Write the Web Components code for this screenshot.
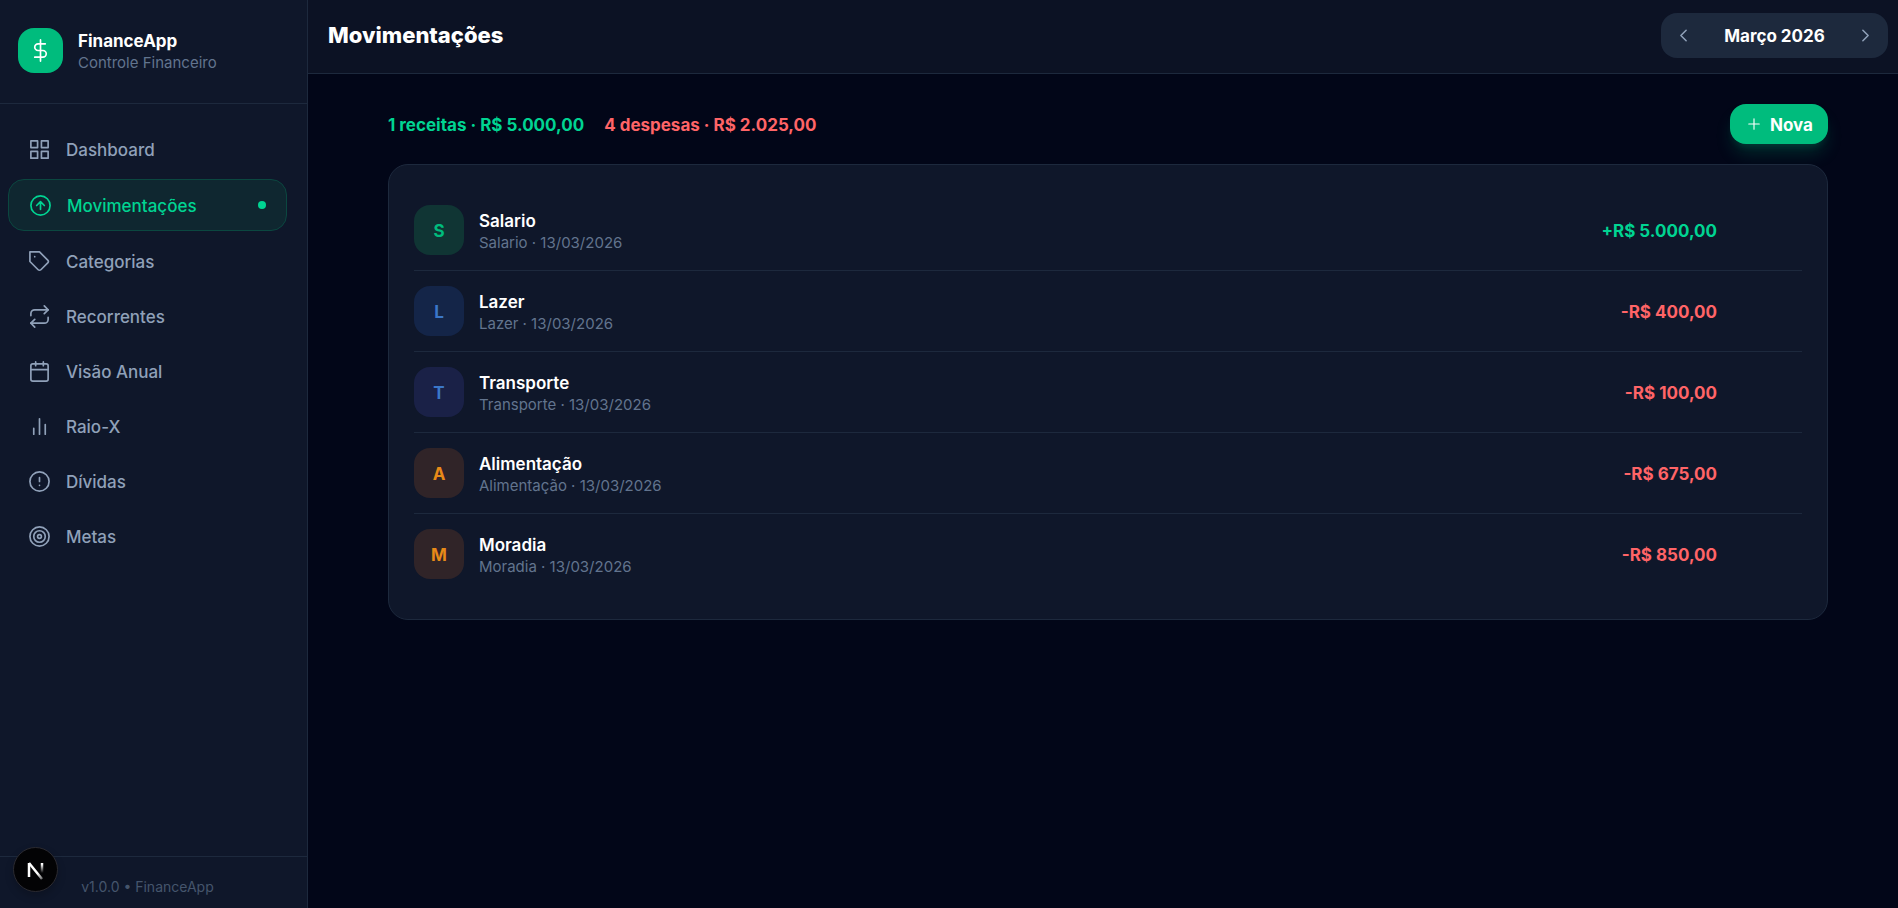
<!DOCTYPE html>
<html lang="pt-BR">
<head>
<meta charset="utf-8">
<meta name="viewport" content="width=device-width, initial-scale=1">
<title>FinanceApp</title>
<style>
    :root {
        --bg: #020618;
        --surface: #0f172a;
        --line: #1d293d;
        --muted: #90a1b9;
        --dim: #62748e;
        --green: #00bc7d;
        --green-text: #00d492;
        --red: #ff6467;
        --radius: 16px;
    }
    body {
        margin: 0;
        background: var(--bg);
        color: #fff;
        font-family: Inter, "Liberation Sans", sans-serif;
    }
</style>
</head>
<body>
<finance-app>
    <app-sidebar slot="sidebar">
        <nav-item icon="grid">Dashboard</nav-item>
        <nav-item icon="arrow" active>Movimentações</nav-item>
        <nav-item icon="tag">Categorias</nav-item>
        <nav-item icon="repeat">Recorrentes</nav-item>
        <nav-item icon="calendar">Visão Anual</nav-item>
        <nav-item icon="bars">Raio-X</nav-item>
        <nav-item icon="alert">Dívidas</nav-item>
        <nav-item icon="target">Metas</nav-item>
    </app-sidebar>
    <app-header slot="header">
        Movimentações
        <month-picker slot="actions">Março 2026</month-picker>
    </app-header>
    <summary-bar>
        <span slot="income">1 receitas · R$ 5.000,00</span>
        <span slot="expense">4 despesas · R$ 2.025,00</span>
    </summary-bar>
    <transaction-list>
        <transaction-item category="Salario" date="13/03/2026" amount="+R$ 5.000,00" income style="--tint: #103534; --ink: #00bc7d">Salario</transaction-item>
        <transaction-item category="Lazer" date="13/03/2026" amount="-R$ 400,00" style="--tint: #142548; --ink: #3b77c8">Lazer</transaction-item>
        <transaction-item category="Transporte" date="13/03/2026" amount="-R$ 100,00" style="--tint: #1a2147; --ink: #3b77c8">Transporte</transaction-item>
        <transaction-item category="Alimentação" date="13/03/2026" amount="-R$ 675,00" style="--tint: #302428; --ink: #e88a18">Alimentação</transaction-item>
        <transaction-item category="Moradia" date="13/03/2026" amount="-R$ 850,00" style="--tint: #302428; --ink: #e88a18">Moradia</transaction-item>
    </transaction-list>
</finance-app>
<dev-badge></dev-badge>

<script>
const ICONS = {
    grid: '<rect x="3" y="3" width="7" height="7"/><rect x="14" y="3" width="7" height="7"/><rect x="14" y="14" width="7" height="7"/><rect x="3" y="14" width="7" height="7"/>',
    arrow: '<circle cx="12" cy="12" r="10"/><path d="m16 12-4-4-4 4M12 16V8"/>',
    tag: '<path d="M20.59 13.41l-7.17 7.17a2 2 0 0 1-2.83 0L2 12V2h10l8.59 8.59a2 2 0 0 1 0 2.82z"/><path d="M7 7h.01"/>',
    repeat: '<path d="m17 1 4 4-4 4"/><path d="M3 11V9a4 4 0 0 1 4-4h14"/><path d="m7 23-4-4 4-4"/><path d="M21 13v2a4 4 0 0 1-4 4H3"/>',
    calendar: '<rect x="3" y="4" width="18" height="18" rx="2"/><path d="M16 2v4M8 2v4M3 10h18"/>',
    bars: '<path d="M18 20V10M12 20V4M6 20v-6"/>',
    alert: '<circle cx="12" cy="12" r="10"/><path d="M12 8v4M12 16h.01"/>',
    target: '<circle cx="12" cy="12" r="10"/><circle cx="12" cy="12" r="6"/><circle cx="12" cy="12" r="2"/>',
    dollar: '<path d="M12 1v22M17 5H9.5a3.5 3.5 0 0 0 0 7h5a3.5 3.5 0 0 1 0 7H6"/>',
    left: '<path d="m15 18-6-6 6-6"/>',
    right: '<path d="m9 18 6-6-6-6"/>',
    plus: '<path d="M12 5v14M5 12h14"/>'
};

const icon = (name, size, stroke = 1.75) => `
    <svg width="${size}" height="${size}" viewBox="0 0 24 24" fill="none" stroke="currentColor"
        stroke-width="${stroke}" stroke-linecap="round" stroke-linejoin="round" aria-hidden="true">${ICONS[name]}</svg>`;

class BaseElement extends HTMLElement {
    constructor() {
        super();
        this.shadowDOM = this.attachShadow({mode: "open"});
    }

    connectedCallback() {
        this.shadowDOM.innerHTML = this.render();
    }
}

class FinanceApp extends BaseElement {
    render() {
        return `
            <style>
            :host {
                display: flex;
                min-height: 100vh;
            }
            .main {
                flex: 1;
                min-width: 0;
            }
            main {
                display: flex;
                flex-direction: column;
                gap: 20px;
                max-width: 1440px;
                margin: 0 auto;
                padding: 30px 70px 30px 80px;
            }
            </style>
            <slot name="sidebar"></slot>
            <div class="main">
                <slot name="header"></slot>
                <main><slot></slot></main>
            </div>
        `;
    }
}

class AppSidebar extends BaseElement {
    render() {
        return `
            <style>
            :host {
                display: flex;
                flex-direction: column;
                flex: none;
                width: 307px;
                background: var(--surface);
                border-right: 1px solid var(--line);
            }
            header {
                display: flex;
                align-items: flex-start;
                gap: 15px;
                padding: 28px 18px 29px;
                border-bottom: 1px solid var(--line);
            }
            .logo {
                display: grid;
                place-items: center;
                width: 45px;
                height: 45px;
                border-radius: var(--radius);
                background: var(--green);
            }
            .brand {
                padding-top: 2px;
            }
            .name {
                font-size: 17px;
                line-height: 22px;
                font-weight: 700;
            }
            .tagline {
                font-size: 15px;
                line-height: 22px;
                color: var(--dim);
            }
            nav {
                display: flex;
                flex-direction: column;
                gap: 5px;
                flex: 1;
                padding: 20px 20px 20px 8px;
            }
            footer {
                padding: 20px 20px 11px 8px;
                border-top: 1px solid var(--line);
                font-size: 14px;
                line-height: 20px;
                text-align: center;
                color: #45556c;
            }
            </style>
            <header>
                <div class="logo">${icon("dollar", 23)}</div>
                <div class="brand">
                    <div class="name">FinanceApp</div>
                    <div class="tagline">Controle Financeiro</div>
                </div>
            </header>
            <nav><slot></slot></nav>
            <footer>v1.0.0 • FinanceApp</footer>
        `;
    }
}

class NavItem extends BaseElement {
    render() {
        const active = this.hasAttribute("active");
        return `
            <style>
            :host {
                display: block;
            }
            a {
                display: flex;
                align-items: center;
                gap: 15px;
                height: 50px;
                padding: 0 20px;
                border-radius: var(--radius);
                font-size: 17px;
                font-weight: 500;
                color: var(--muted);
                text-decoration: none;
            }
            :host([active]) a {
                border: 1px solid #0b4740;
                background: #0f2730;
                color: var(--green-text);
            }
            .label {
                flex: 1;
                padding-top: 2px;
            }
            .dot {
                width: 8px;
                height: 8px;
                border-radius: 50%;
                background: var(--green-text);
            }
            </style>
            <a href="#"${active ? ' aria-current="page"' : ""}>
                ${icon(this.getAttribute("icon"), 23)}
                <span class="label"><slot></slot></span>
                ${active ? '<span class="dot"></span>' : ""}
            </a>
        `;
    }
}

class AppHeader extends BaseElement {
    render() {
        return `
            <style>
            :host {
                display: flex;
                align-items: center;
                justify-content: space-between;
                padding: 13px 10px 15px 20px;
                background: #0c1224;
                border-bottom: 1px solid var(--line);
            }
            h1 {
                margin: 0;
                padding-bottom: 2px;
                font-size: 22px;
                line-height: 30px;
                font-weight: 800;
            }
            </style>
            <h1><slot></slot></h1>
            <slot name="actions"></slot>
        `;
    }
}

class MonthPicker extends BaseElement {
    render() {
        return `
            <style>
            :host {
                display: flex;
                align-items: center;
                box-sizing: border-box;
                width: 227px;
                height: 45px;
                padding: 0 5px;
                border-radius: var(--radius);
                background: var(--line);
            }
            button {
                display: grid;
                place-items: center;
                width: 35px;
                height: 35px;
                padding: 0;
                border: 0;
                background: none;
                color: var(--muted);
                cursor: pointer;
            }
            span {
                flex: 1;
                text-align: center;
                font-size: 17px;
                font-weight: 700;
            }
            </style>
            <button aria-label="Mês anterior">${icon("left", 21)}</button>
            <span><slot></slot></span>
            <button aria-label="Próximo mês">${icon("right", 21)}</button>
        `;
    }
}

class SummaryBar extends BaseElement {
    render() {
        return `
            <style>
            :host {
                display: flex;
                align-items: center;
                justify-content: space-between;
                font-size: 17px;
                font-weight: 700;
            }
            .totals {
                display: flex;
                gap: 20px;
                padding-top: 2px;
            }
            .income {
                color: var(--green-text);
            }
            .expense {
                color: var(--red);
            }
            button {
                display: flex;
                align-items: center;
                gap: 7px;
                height: 40px;
                padding: 0 15px;
                border: 0;
                border-radius: var(--radius);
                background: var(--green);
                box-shadow: 0 12px 18px -3px #00bc7d33, 0 5px 8px -4px #00bc7d33;
                color: #fff;
                font: inherit;
                cursor: pointer;
            }
            .label {
                padding-top: 2px;
            }
            </style>
            <div class="totals">
                <span class="income"><slot name="income"></slot></span>
                <span class="expense"><slot name="expense"></slot></span>
            </div>
            <button>${icon("plus", 18, 1.5)}<span class="label">Nova</span></button>
        `;
    }
}

class TransactionList extends BaseElement {
    render() {
        return `
            <style>
            :host {
                display: block;
                position: relative;
                padding: 25px;
                border: 1px solid var(--line);
                border-radius: 20px;
                background: var(--surface);
            }
            </style>
            <slot></slot>
        `;
    }
}

class TransactionItem extends BaseElement {
    render() {
        return `
            <style>
            :host {
                display: flex;
                align-items: center;
                gap: 15px;
                padding: 15px 85px 15px 0;
                border-bottom: 1px solid var(--line);
            }
            :host(:last-child) {
                border-bottom: 0;
            }
            .avatar {
                display: grid;
                place-items: center;
                box-sizing: border-box;
                width: 50px;
                height: 50px;
                padding-top: 2px;
                border-radius: var(--radius);
                background: var(--tint);
                color: var(--ink);
                font-size: 17px;
                font-weight: 700;
            }
            .info {
                flex: 1;
                padding-top: 2px;
            }
            .name {
                font-size: 17px;
                line-height: 24px;
                font-weight: 600;
            }
            .meta {
                font-size: 15px;
                line-height: 20px;
                color: var(--dim);
            }
            .amount {
                padding-top: 2px;
                font-size: 17px;
                font-weight: 700;
                color: var(--red);
            }
            :host([income]) .amount {
                color: var(--green-text);
            }
            </style>
            <div class="avatar">${this.getAttribute("category")[0]}</div>
            <div class="info">
                <div class="name"><slot></slot></div>
                <div class="meta">${this.getAttribute("category")} · ${this.getAttribute("date")}</div>
            </div>
            <div class="amount">${this.getAttribute("amount")}</div>
        `;
    }
}

// Round framework badge floating over the sidebar footer
class DevBadge extends BaseElement {
    render() {
        return `
            <style>
            :host {
                position: fixed;
                left: 13px;
                bottom: 16px;
            }
            button {
                display: grid;
                place-items: center;
                width: 45px;
                height: 45px;
                padding: 0;
                border: 1px solid #2b2a30;
                border-radius: 50%;
                background: #030305;
                box-shadow: 0 4px 8px #0003;
                cursor: pointer;
            }
            </style>
            <button aria-label="Dev Tools">
                <svg width="18" height="20" viewBox="0 0 18 20" fill="none" stroke-width="2" aria-hidden="true">
                    <defs>
                        <linearGradient id="fade" x1="0" y1="2" x2="0" y2="13" gradientUnits="userSpaceOnUse">
                            <stop offset="0.2" stop-color="#fff"/>
                            <stop offset="1" stop-color="#fff" stop-opacity="0"/>
                        </linearGradient>
                        <linearGradient id="leg" x1="9" y1="10" x2="17" y2="19" gradientUnits="userSpaceOnUse">
                            <stop offset="0.3" stop-color="#fff"/>
                            <stop offset="1" stop-color="#fff" stop-opacity="0.3"/>
                        </linearGradient>
                    </defs>
                    <path d="M2 17V3" stroke="#fff" stroke-width="2.5"/>
                    <path d="M2 3l13 16" stroke="url(#leg)" stroke-width="2.5"/>
                    <path d="M15 3v10" stroke="url(#fade)" stroke-width="2.5"/>
                </svg>
            </button>
        `;
    }
}

customElements.define("finance-app", FinanceApp);
customElements.define("app-sidebar", AppSidebar);
customElements.define("nav-item", NavItem);
customElements.define("app-header", AppHeader);
customElements.define("month-picker", MonthPicker);
customElements.define("summary-bar", SummaryBar);
customElements.define("transaction-list", TransactionList);
customElements.define("transaction-item", TransactionItem);
customElements.define("dev-badge", DevBadge);
</script>
</body>
</html>
